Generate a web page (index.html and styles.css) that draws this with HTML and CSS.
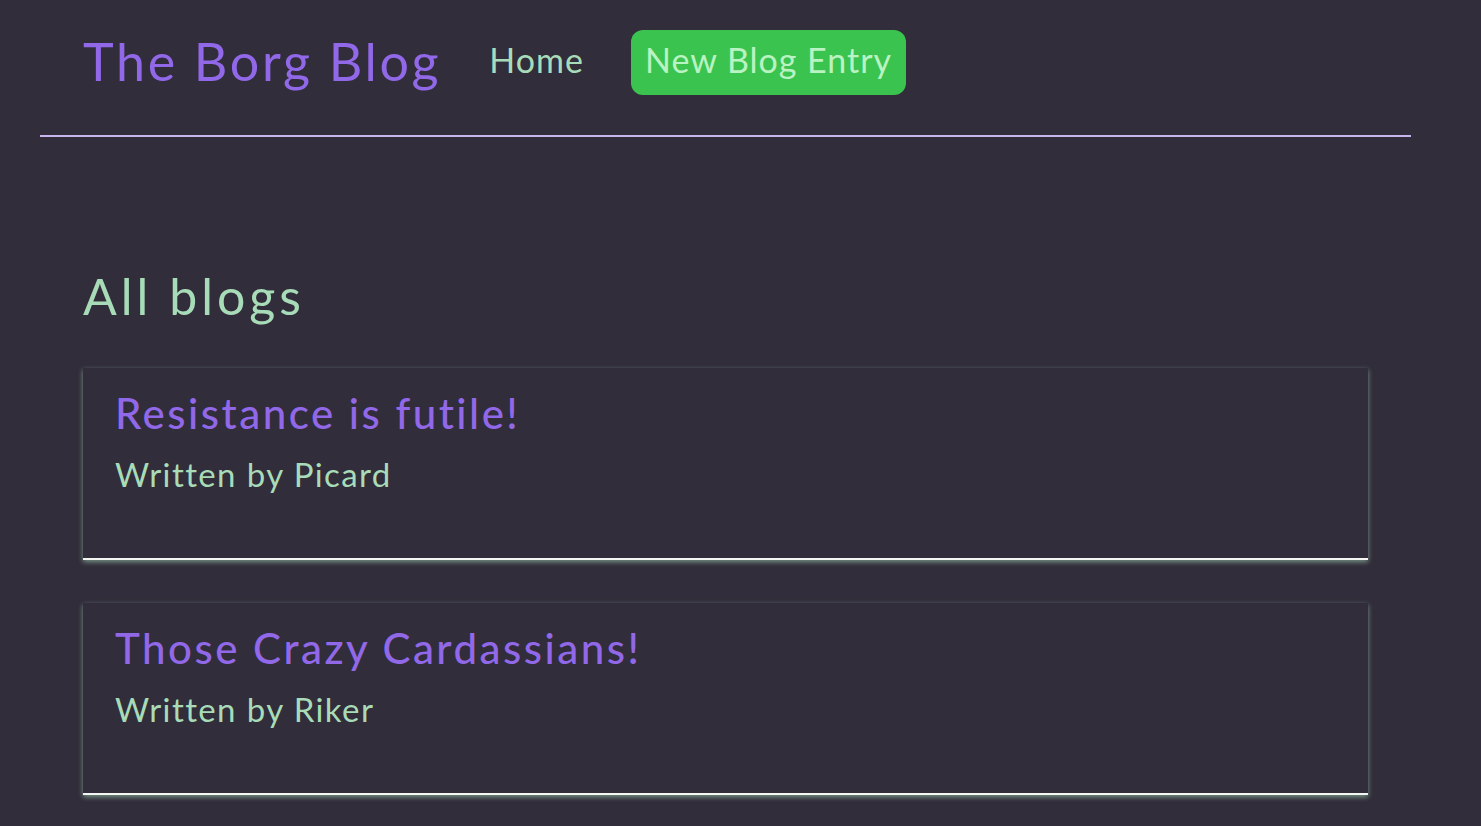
FILE: index.html
```html
<!DOCTYPE html>
<html lang="en">
<head>
<meta charset="utf-8">
<title>The Borg Blog</title>
<link rel="stylesheet" href="styles.css">
</head>
<body>
<nav class="navbar">
  <h1 class="brand">The Borg Blog</h1>
  <div class="links">
    <a class="nav-link" href="#">Home</a>
    <a class="nav-link new-entry" href="#">New Blog Entry</a>
  </div>
</nav>
<main class="home">
  <h2 class="page-title">All blogs</h2>
  <div class="blog-preview">
    <h2 class="blog-title">Resistance is futile!</h2>
    <p class="blog-author">Written by Picard</p>
  </div>
  <div class="blog-preview">
    <h2 class="blog-title">Those Crazy Cardassians!</h2>
    <p class="blog-author">Written by Riker</p>
  </div>
</main>
</body>
</html>
```
FILE: styles.css
```css
* { box-sizing: border-box; }
html, body {
  margin: 0;
  padding: 0;
  background: #312d3a;
  font-family: Lato, "Open Sans", sans-serif;
  overflow: hidden;
}
.navbar {
  display: flex;
  align-items: flex-start;
  margin: 0 70px 0 40px;
  padding: 30px 0 0 43px;
  height: 137px;
  border-bottom: 2px solid #c9b5ee;
}
.brand {
  margin: 0;
  font-size: 52px;
  font-weight: 400;
  letter-spacing: 2.7px;
  color: #9168e8;
  line-height: 62px;
}
.links {
  display: flex;
  align-items: center;
  margin-left: 48px;
}
.nav-link {
  text-decoration: none;
  color: #a8dcb8;
  font-size: 34px;
  letter-spacing: 1px;
  line-height: 59px;
  padding-bottom: 6px;
}
.new-entry {
  margin-left: 47px;
  background: #3bc34f;
  color: #b9f3c3;
  border-radius: 12px;
  padding: 0 14px 6px;
}
.home {
  margin: 0 113px 0 83px;
  padding-top: 130px;
}
.page-title {
  margin: 0 0 43px;
  font-size: 50px;
  font-weight: 400;
  letter-spacing: 4px;
  color: #a8dcb8;
  line-height: 58px;
}
.blog-preview {
  padding: 21px 32px 62px;
  margin-bottom: 43px;
  border-bottom: 2px solid #f2f5f2;
  box-shadow: 0 2px 5px rgba(170, 218, 186, 0.6);
}
.blog-title {
  margin: 0;
  font-size: 42px;
  font-weight: 500;
  letter-spacing: 2.5px;
  color: #9168e8;
  line-height: 48px;
}
.blog-author {
  margin: 15px 0 0;
  font-size: 33px;
  letter-spacing: 1.4px;
  color: #a8dcb8;
  line-height: 44px;
}
```
